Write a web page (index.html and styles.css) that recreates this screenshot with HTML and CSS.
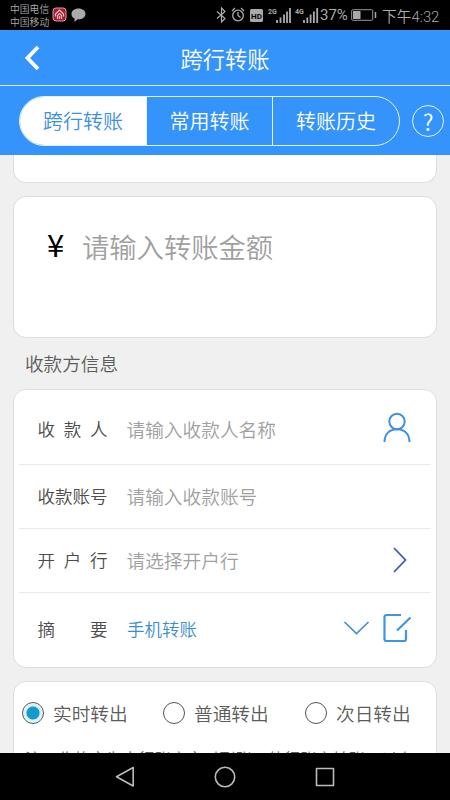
FILE: index.html
```html
<!DOCTYPE html>
<html lang="zh-CN">
<head>
<meta charset="utf-8">
<title>跨行转账</title>
<link rel="stylesheet" href="styles.css">
</head>
<body>
<div class="phone">
  <div class="status">
    <div class="carriers"><span>中国电信</span><span>中国移动</span></div>
    <svg class="notices" width="36" height="18" viewBox="0 0 36 18">
      <rect x="1" y="2" width="13" height="13" rx="3" fill="#b3172c" stroke="#c9a5aa"/>
      <path d="M3.5 10.5V8l4-4 4 4v2.500M5.500 13V9.500l2-2 2 2V13M7.500 10v3" fill="none" stroke="#e5c4c8" stroke-width="1.200"/>
      <path d="M26.500 2.500c4 0 7 2.400 7 5.400s-3 5.400-7 5.400h-.8L22.500 16v-3.500c-2-1-3-2.600-3-4.600 0-3 3-5.400 7-5.400z" fill="#aaa"/>
    </svg>
    <svg class="signals" width="107" height="24" viewBox="0 0 107 24">
      <path d="M2 8.500l8 7-3.500 3.500V5L10 8.500l-8 7" fill="none" stroke="#aaa" stroke-width="1.200"/>
      <g fill="none" stroke="#aaa" stroke-width="1.300"><circle cx="23" cy="12.500" r="5.300"/><path d="M23 9v3.500l2.500 2M17 8l3-3M29 8l-3-3"/></g>
      <rect x="35" y="6" width="13" height="13" rx="1.500" fill="#aaa"/>
      <text x="36" y="15.500" class="hd">HD</text>
      <text x="53" y="11" class="net">2G</text>
      <path d="M62 17v3M65.500 14.500v5.500M69 11.500v8.500M72 8.500v11.500M75 5v15" stroke="#aaa" stroke-width="1.800"/>
      <text x="80" y="11" class="net">4G</text>
      <path d="M89 17v3M92.300 14.500v5.500M95.600 11.500v8.500M98.900 8.500v11.500M102.200 5v15" stroke="#aaa" stroke-width="1.800"/>
    </svg>
    <span class="percent">37%</span>
    <svg class="battery" width="26" height="14" viewBox="0 0 26 14"><rect x=".7" y="1.700" width="21" height="10.600" rx="1" fill="none" stroke="#999"/><rect x="2" y="3" width="7.500" height="8" fill="#aaa"/><path d="M24.500 4v6" stroke="#aaa" stroke-width="1.500"/></svg>
    <span class="clock">下午4:32</span>
  </div>
  <header class="header">
    <svg class="back" width="16" height="26" viewBox="0 0 16 26"><path d="M14 2L3.500 13 14 24" fill="none" stroke="#fff" stroke-width="3.800"/></svg>
    <h1>跨行转账</h1>
  </header>
  <nav class="tabs">
    <div class="pill"><span class="tab active">跨行转账</span><span class="tab">常用转账</span><span class="tab">转账历史</span></div>
    <span class="help">?</span>
  </nav>
  <main class="content">
    <section class="card previous"></section>
    <section class="card amount"><span class="yen">¥</span><span class="amount-hint">请输入转账金额</span></section>
    <h2>收款方信息</h2>
    <section class="card form">
      <div class="row payee"><span class="label"><i>收</i><i>款</i><i>人</i></span><span class="hint">请输入收款人名称</span>
        <svg class="icon" width="30" height="32" viewBox="0 0 30 32"><g fill="none" stroke="#3d90df" stroke-width="2"><circle cx="15" cy="9.500" r="7.700"/><path d="M2.500 30c0-8 5-12.700 12.500-12.700S27.500 22 27.500 30"/></g></svg>
      </div>
      <div class="row"><span class="label"><i>收</i><i>款</i><i>账</i><i>号</i></span><span class="hint">请输入收款账号</span></div>
      <div class="row"><span class="label"><i>开</i><i>户</i><i>行</i></span><span class="hint">请选择开户行</span>
        <svg class="icon next" width="16" height="28" viewBox="0 0 16 28"><path d="M2 2l11.500 12L2 26" fill="none" stroke="#4552c6" stroke-width="1.800"/></svg>
      </div>
      <div class="row memo"><span class="label"><i>摘</i><i>要</i></span><span class="value">手机转账</span>
        <svg class="icon edit" width="68" height="32" viewBox="0 0 68 32"><path d="M1.500 10L13.500 21.500 25.500 10" fill="none" stroke="#458fd0" stroke-width="1.700"/><path d="M58 3H43.500a2 2 0 0 0-2 2v22a2 2 0 0 0 2 2H61a2 2 0 0 0 2-2v-9M54 18.500L67.500 5.500" fill="none" stroke="#3d96e5" stroke-width="2.200"/></svg>
      </div>
    </section>
    <section class="card mode">
      <div class="options">
        <span class="option"><b class="radio checked"></b><i>实时转出</i></span>
        <span class="option"><b class="radio"></b><i>普通转出</i></span>
        <span class="option"><b class="radio"></b><i>次日转出</i></span>
      </div>
      <p>注：收款方为本行账户实时到账，他行账户转账，以上</p>
    </section>
  </main>
  <footer class="system">
    <svg width="220" height="24" viewBox="0 0 220 24"><g fill="none" stroke="#bbb" stroke-width="1.600" stroke-linejoin="round"><path d="M18.200 2.500v18.500L1.500 11.700z"/><circle cx="110" cy="12" r="9.700"/><rect x="201.500" y="3.500" width="17" height="17"/></g></svg>
  </footer>
</div>
</body>
</html>
```
FILE: styles.css
```css
* { box-sizing: border-box; }
body { margin: 0; font-family: "Noto Sans CJK SC", sans-serif; font-weight: 350; background: #000; }
i { font-style: normal; }
svg { display: block; flex: none; }
.phone { width: 450px; height: 800px; display: flex; flex-direction: column; overflow: hidden; }
.status { height: 30px; flex: none; display: flex; align-items: center; padding-left: 10px; background: #000; color: #aaa; white-space: nowrap; }
.carriers { width: 42px; display: flex; flex-direction: column; font-size: 9.800px; line-height: 13.500px; padding-top: 2px; }
.notices { margin-top: -1px; }
.signals { margin-left: 127px; }
.hd { font: bold 8px Roboto, sans-serif; fill: #000; }
.net { font: bold 7px Roboto, sans-serif; fill: #aaa; }
.percent { width: 30px; margin-left: -2px; font: 15px Roboto, sans-serif; }
.battery { margin-left: 1px; }
.clock { margin-left: 5px; font: 350 14.800px Roboto, "Noto Sans CJK SC", sans-serif; }
.header { height: 55px; flex: none; display: grid; grid-template-columns: 60px 1fr 60px; align-items: center; background: #3594fc; color: #fff; }
.back { margin-left: 24px; }
h1 { margin: 0; text-align: center; font-size: 22.300px; line-height: 30px; font-weight: 350; }
.tabs { height: 70px; flex: none; display: flex; align-items: center; padding: 1px 6px 0 19px; border-top: 1px solid #d8eeff; background: #3594fc; color: #fff; }
.pill { width: 381px; height: 50px; border: 1px solid #e2f3ff; border-radius: 25px; display: grid; grid-template-columns: 127px 126px 1fr; overflow: hidden; }
.tab { display: flex; align-items: center; justify-content: center; font-size: 20px; line-height: 28px; border-right: 1px solid #e2f3ff; }
.tab:last-child { border-right: 0; }
.active { background: #fff; color: #3e90dc; }
.help { width: 32px; height: 32px; margin-left: 12px; border: 1.500px solid #e2f3ff; border-radius: 50%; display: flex; align-items: center; justify-content: center; font-size: 23px; line-height: 28px; padding-bottom: 1px; }
.content { height: 598px; flex: none; overflow: hidden; padding: 0 13px; background: #f0f0f0; }
.card { background: #fff; border: 1px solid #dedede; border-radius: 13px; }
.previous { height: 28px; border-top: 0; border-radius: 0 0 13px 13px; }
.amount { height: 142px; margin-top: 13px; display: flex; align-items: center; padding: 0 0 43px 32px; }
.yen { width: 36px; padding: 0 0 4px 1px; font-size: 31px; line-height: 40px; font-weight: 400; color: #000; }
.amount-hint { font-size: 27.300px; line-height: 40px; color: #a0a0a0; }
h2 { margin: 10px 0 0 12px; height: 29px; font-size: 18.600px; line-height: 29px; font-weight: 350; color: #5c5c5c; }
.form { height: 279px; margin-top: 12px; padding: 0 5px; }
.row { height: 64px; display: flex; align-items: center; padding: 0 19px 1px 18.500px; border-bottom: 1px solid #e9e9e9; }
.payee { height: 75px; padding-top: 7px; padding-bottom: 3px; }
.memo { height: 72px; border-bottom: 0; }
.label { width: 70px; display: flex; justify-content: space-between; font-size: 17.500px; line-height: 26px; color: #4c4c4c; }
.hint { margin-left: 19px; font-size: 18.700px; line-height: 26px; color: #a0a0a0; }
.value { margin-left: 19.500px; font-size: 17.500px; line-height: 26px; color: #3d8fcc; }
.icon { margin-left: auto; margin-top: -2px; }
.next { margin-right: 4px; margin-top: 0; }
.edit { margin-right: 1px; }
.mode { height: 120px; margin-top: 13px; padding: 17px 11px 0 8px; }
.options { display: grid; grid-template-columns: 141px 142px 1fr; }
.option { display: flex; align-items: center; gap: 9px; font-size: 18.700px; line-height: 28px; color: #5c5c5c; white-space: nowrap; }
.radio { width: 22px; height: 22px; border: 1px solid #555; border-radius: 50%; }
.checked { background: radial-gradient(circle, #1398cf 0 6px, #d8f2fb 7px 9px, #fff 10px); }
.mode p { margin: 19px 0 0 3px; font-size: 16.200px; line-height: 24px; color: #5c5c5c; white-space: nowrap; }
.system { height: 47px; flex: none; display: flex; align-items: center; justify-content: center; background: #000; }
```
